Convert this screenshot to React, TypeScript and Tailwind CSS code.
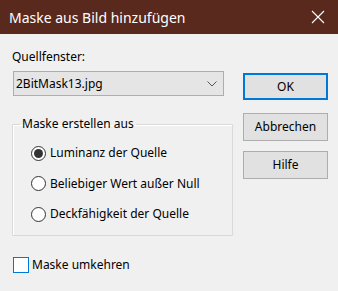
import React from "react";

const font = { fontFamily: '"Segoe UI", "Noto Sans", sans-serif' };

function Radio({ checked, label }: { checked?: boolean; label: string }) {
  return (
    <div className="flex items-center h-[30.5px]">
      <div className="ml-[18px] w-[15px] h-[15px] rounded-full border border-[#333333] bg-white flex items-center justify-center">
        {checked && <div className="w-[9px] h-[9px] rounded-full bg-[#333333]" />}
      </div>
      <span className="ml-[4px] text-[12px] text-black leading-none">{label}</span>
    </div>
  );
}

export default function App() {
  return (
    <div className="w-[338px] h-[291px] bg-[#f0f0f0] flex flex-col overflow-hidden" style={font}>
      <div className="h-[34px] bg-[#5a291d] flex items-center justify-between shrink-0">
        <span className="ml-[9px] text-[14px] text-white">Maske aus Bild hinzufügen</span>
        <svg width="14" height="14" viewBox="0 0 14 14" className="mr-[13px]">
          <path d="M1 1 L13 13 M13 1 L1 13" stroke="#ffffff" strokeWidth="1.1" />
        </svg>
      </div>
      <div className="flex">
        <div className="pl-[12px] w-[233px] flex flex-col">
          <div className="mt-[14px] h-[18px] flex items-center text-[12px] text-black">Quellfenster:</div>
          <div className="mt-[5px] ml-[1px] w-[211px] h-[25px] border border-[#adadad] bg-[#e5e5e5] flex items-center justify-between">
            <span className="ml-[2px] text-[12px] text-black">2BitMask13.jpg</span>
            <svg width="10" height="6" viewBox="0 0 10 6" className="mr-[6px]">
              <path d="M0.5 0.5 L5 5 L9.5 0.5" fill="none" stroke="#555555" strokeWidth="1" />
            </svg>
          </div>
          <fieldset className="mt-[19px] w-[221px] h-[121px] border border-[#d9d9d9] rounded-[1px] shadow-[inset_1px_1px_0_#ffffff]">
            <legend className="ml-[7px] px-[2px] text-[12px] text-black h-[18px] leading-[18px]">Maske erstellen aus</legend>
            <div className="mt-[5px] flex flex-col">
              <Radio checked label="Luminanz der Quelle" />
              <Radio label="Beliebiger Wert außer Null" />
              <Radio label="Deckfähigkeit der Quelle" />
            </div>
          </fieldset>
          <div className="mt-[20px] flex items-center">
            <div className="ml-[1px] w-[16px] h-[16px] border border-[#0078d7] bg-white" />
            <span className="ml-[3px] text-[12px] text-black">Maske umkehren</span>
          </div>
        </div>
        <div className="ml-[10px] flex flex-col">
          <div className="mt-[39px] w-[85px] h-[27px] border-2 border-[#0078d7] bg-[#e1e1e1] flex items-center justify-center text-[12px] text-black">OK</div>
          <div className="mt-[13px] w-[85px] h-[28px] border border-[#adadad] bg-[#e1e1e1] flex items-center justify-center text-[12px] text-black">Abbrechen</div>
          <div className="mt-[10px] w-[85px] h-[28px] border border-[#adadad] bg-[#e1e1e1] flex items-center justify-center text-[12px] text-black">Hilfe</div>
        </div>
      </div>
    </div>
  );
}
